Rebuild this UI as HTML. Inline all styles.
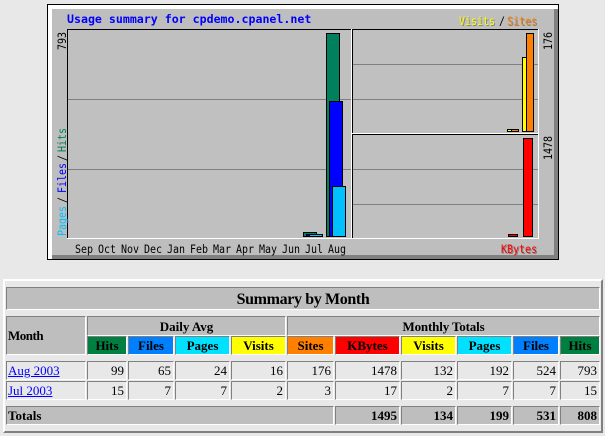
<!DOCTYPE html>
<html><head><meta charset="utf-8"><style>
html,body{margin:0;padding:0;background:#e8e8e8;width:605px;height:436px;overflow:hidden}
svg{position:absolute;left:0;top:0}
svg text{font-family:"DejaVu Sans Mono","Liberation Mono",monospace}
.c{position:absolute;box-sizing:border-box;border:1px solid;border-color:#808080 #fff #fff #808080;background:#e8e8e8;font:13px/18px "Liberation Serif",serif;color:#000;white-space:nowrap;overflow:hidden}
.g{background:#bebebe}
.h{font-weight:bold;text-align:center;line-height:17px}
.r{text-align:right;padding-right:2px}
.b{font-weight:bold}
a{color:#00f}
</style></head><body>
<svg width="605" height="436" shape-rendering="crispEdges">
<rect x="47" y="4" width="512" height="256" fill="#000"/>
<rect x="48" y="5" width="510" height="254" fill="#fff"/>
<rect x="52" y="9" width="506" height="250" fill="#808080"/>
<rect x="52" y="9" width="502" height="246" fill="#bebebe"/>
<rect x="67" y="29" width="285" height="210" fill="#fff"/>
<rect x="67" y="29" width="284" height="209" fill="#000"/>
<rect x="68" y="30" width="283" height="208" fill="#c0c0c0"/>
<rect x="352" y="29" width="187" height="106" fill="#fff"/>
<rect x="352" y="29" width="186" height="104" fill="#000"/>
<rect x="353" y="30" width="185" height="103" fill="#c0c0c0"/>
<rect x="352" y="134" width="187" height="105" fill="#fff"/>
<rect x="352" y="134" width="186" height="104" fill="#000"/>
<rect x="353" y="135" width="185" height="103" fill="#c0c0c0"/>
<g fill="#808080">
<rect x="68" y="99" width="283" height="1"/><rect x="68" y="169" width="283" height="1"/>
<rect x="353" y="64" width="185" height="1"/><rect x="353" y="99" width="185" height="1"/>
<rect x="353" y="169" width="185" height="1"/><rect x="353" y="204" width="185" height="1"/>
</g>
<g stroke="#000" stroke-width="1">
<rect x="303.5" y="232.5" width="13" height="4" fill="#00805c"/>
<rect x="306.5" y="234.5" width="13" height="2" fill="#0000ff"/>
<rect x="309.5" y="234.5" width="13" height="2" fill="#00c0ff"/>
<rect x="326.5" y="33.5" width="13" height="203" fill="#00805c"/>
<rect x="329.5" y="101.5" width="13" height="135" fill="#0000ff"/>
<rect x="332.5" y="186.5" width="13" height="50" fill="#00c0ff"/>
<rect x="507.5" y="129.5" width="5" height="2" fill="#ffff00"/>
<rect x="511.5" y="129.5" width="7" height="2" fill="#ff8000"/>
<rect x="522.5" y="57.5" width="5" height="74" fill="#ffff00"/>
<rect x="526.5" y="33.5" width="7" height="98" fill="#ff8000"/>
<rect x="508.5" y="234.5" width="9" height="2" fill="#ff0000"/>
<rect x="523.5" y="138.5" width="9" height="98" fill="#ff0000"/>
</g>
</svg>
<svg width="605" height="436">
<text x="67" y="23" font-size="11.6" font-weight="bold" fill="#0000ff">Usage summary for cpdemo.cpanel.net</text>
<g font-size="10" fill="#000" transform="translate(0,253) scale(1,1.15)">
<text x="75" y="0">Sep</text><text x="98" y="0">Oct</text><text x="121" y="0">Nov</text><text x="144" y="0">Dec</text><text x="167" y="0">Jan</text><text x="190" y="0">Feb</text><text x="213" y="0">Mar</text><text x="236" y="0">Apr</text><text x="259" y="0">May</text><text x="282" y="0">Jun</text><text x="305" y="0">Jul</text><text x="328" y="0">Aug</text>
</g>
<g font-size="10" transform="translate(0,25) scale(1,1.15)">
<text x="460" y="1" fill="#808080">Visits</text><text x="459" y="0" fill="#ffff00">Visits</text>
<text x="499" y="0" fill="#000">/</text>
<text x="508" y="1" fill="#808080">Sites</text><text x="507" y="0" fill="#ff8000">Sites</text>
</g>
<g font-size="10" transform="translate(0,253) scale(1,1.15)">
<text x="502" y="1" fill="#808080">KBytes</text><text x="501" y="0" fill="#ff0000">KBytes</text>
</g>
<g font-size="10" fill="#000">
<text transform="translate(66,50) rotate(-90) scale(1,1.15)">793</text>
<text transform="translate(552,50) rotate(-90) scale(1,1.15)">176</text>
<text transform="translate(552,160) rotate(-90) scale(1,1.15)">1478</text>
</g>
<g font-size="10" transform="translate(66,236) rotate(-90) scale(1,1.15)">
<text x="0" y="0" fill="#00c0ff">Pages</text>
<text x="33" y="0" fill="#000">/</text>
<text x="43" y="0" fill="#0000ff">Files</text>
<text x="75" y="0" fill="#000">/</text>
<text x="84" y="0" fill="#00805c">Hits</text>
</g>
</svg>

<div style="position:absolute;left:3px;top:279px;width:600px;height:154px;box-sizing:border-box;border:2px solid;border-color:#fff #808080 #808080 #fff"></div>

<div class="c g" style="left:6px;top:287px;width:594px;height:23px;font:bold 16px/23px 'Liberation Serif',serif;letter-spacing:-.37px;text-align:center">Summary by Month</div>

<div class="c g b" style="left:6px;top:316px;width:80px;height:39px;line-height:38px;padding-left:1px;letter-spacing:-.5px">Month</div>
<div class="c g h" style="left:87px;top:316px;width:199px;height:20px;line-height:19px">Daily Avg</div>
<div class="c g h" style="left:287px;top:316px;width:313px;height:20px;line-height:19px;letter-spacing:-.15px">Monthly Totals</div>

<div class="c h" style="left:87px;top:336px;width:40px;height:19px;background:#008040">Hits</div>
<div class="c h" style="left:128px;top:336px;width:46px;height:19px;background:#0080ff">Files</div>
<div class="c h" style="left:175px;top:336px;width:55px;height:19px;background:#00e0ff">Pages</div>
<div class="c h" style="left:231px;top:336px;width:55px;height:19px;background:#ffff00">Visits</div>
<div class="c h" style="left:287px;top:336px;width:47px;height:19px;background:#ff8000">Sites</div>
<div class="c h" style="left:335px;top:336px;width:65px;height:19px;background:#ff0000">KBytes</div>
<div class="c h" style="left:401px;top:336px;width:55px;height:19px;background:#ffff00">Visits</div>
<div class="c h" style="left:457px;top:336px;width:55px;height:19px;background:#00e0ff">Pages</div>
<div class="c h" style="left:513px;top:336px;width:46px;height:19px;background:#0080ff">Files</div>
<div class="c h" style="left:560px;top:336px;width:40px;height:19px;background:#008040">Hits</div>

<div class="c" style="left:6px;top:361px;width:80px;height:19px;padding-left:1px"><a href="#">Aug 2003</a></div>
<div class="c r" style="left:87px;top:361px;width:40px;height:19px">99</div>
<div class="c r" style="left:128px;top:361px;width:46px;height:19px">65</div>
<div class="c r" style="left:175px;top:361px;width:55px;height:19px">24</div>
<div class="c r" style="left:231px;top:361px;width:55px;height:19px">16</div>
<div class="c r" style="left:287px;top:361px;width:47px;height:19px">176</div>
<div class="c r" style="left:335px;top:361px;width:65px;height:19px">1478</div>
<div class="c r" style="left:401px;top:361px;width:55px;height:19px">132</div>
<div class="c r" style="left:457px;top:361px;width:55px;height:19px">192</div>
<div class="c r" style="left:513px;top:361px;width:46px;height:19px">524</div>
<div class="c r" style="left:560px;top:361px;width:40px;height:19px">793</div>

<div class="c" style="left:6px;top:381px;width:80px;height:19px;padding-left:1px"><a href="#">Jul 2003</a></div>
<div class="c r" style="left:87px;top:381px;width:40px;height:19px">15</div>
<div class="c r" style="left:128px;top:381px;width:46px;height:19px">7</div>
<div class="c r" style="left:175px;top:381px;width:55px;height:19px">7</div>
<div class="c r" style="left:231px;top:381px;width:55px;height:19px">2</div>
<div class="c r" style="left:287px;top:381px;width:47px;height:19px">3</div>
<div class="c r" style="left:335px;top:381px;width:65px;height:19px">17</div>
<div class="c r" style="left:401px;top:381px;width:55px;height:19px">2</div>
<div class="c r" style="left:457px;top:381px;width:55px;height:19px">7</div>
<div class="c r" style="left:513px;top:381px;width:46px;height:19px">7</div>
<div class="c r" style="left:560px;top:381px;width:40px;height:19px">15</div>

<div class="c g b" style="left:6px;top:406px;width:328px;height:19px;padding-left:1px">Totals</div>
<div class="c g b r" style="left:335px;top:406px;width:65px;height:19px">1495</div>
<div class="c g b r" style="left:401px;top:406px;width:55px;height:19px">134</div>
<div class="c g b r" style="left:457px;top:406px;width:55px;height:19px">199</div>
<div class="c g b r" style="left:513px;top:406px;width:46px;height:19px">531</div>
<div class="c g b r" style="left:560px;top:406px;width:40px;height:19px">808</div>
</body></html>
